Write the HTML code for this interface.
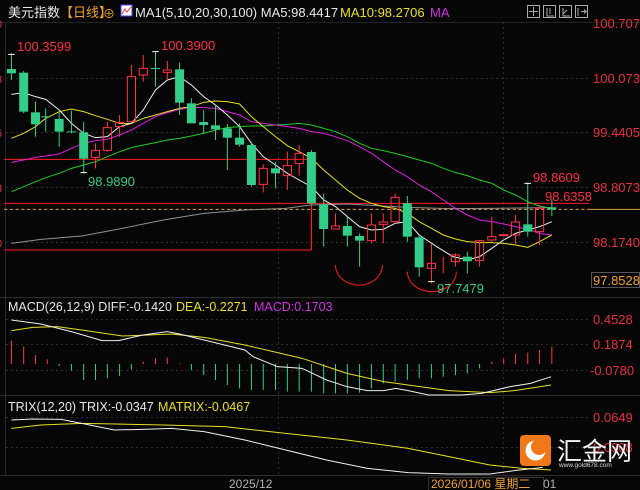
<!DOCTYPE html>
<html><head><meta charset="utf-8"><style>
html,body{margin:0;padding:0;background:#060606;width:640px;height:490px;overflow:hidden}
svg{display:block}
text{font-family:"Liberation Sans","Noto Sans CJK SC",sans-serif}
.nl{fill:none;vector-effect:non-scaling-stroke}
</style></head><body>
<svg width="640" height="490" viewBox="0 0 640 490" xmlns="http://www.w3.org/2000/svg">
<rect width="640" height="490" fill="#060606"/>
<!-- frame lines -->
<line x1="5.5" y1="22" x2="5.5" y2="476" stroke="#2a2a2a"/>
<line x1="0" y1="22.5" x2="640" y2="22.5" stroke="#222"/>
<line x1="0" y1="297.5" x2="640" y2="297.5" stroke="#2e2e2e"/>
<line x1="0" y1="395.5" x2="640" y2="395.5" stroke="#2e2e2e"/>
<line x1="0" y1="475.5" x2="640" y2="475.5" stroke="#2e2e2e"/>
<!-- grid -->
<g stroke="#2c2c2c" stroke-dasharray="2,3">
<line x1="6" y1="78.5" x2="588" y2="78.5"/><line x1="6" y1="132.5" x2="588" y2="132.5"/>
<line x1="6" y1="187.5" x2="588" y2="187.5"/><line x1="6" y1="242.5" x2="588" y2="242.5"/>
<line x1="6" y1="319.5" x2="588" y2="319.5"/><line x1="6" y1="344.5" x2="588" y2="344.5"/>
<line x1="6" y1="370.5" x2="588" y2="370.5"/><line x1="6" y1="417.5" x2="588" y2="417.5"/>
<line x1="6" y1="447.5" x2="588" y2="447.5"/>
<line x1="278.5" y1="22" x2="278.5" y2="475"/><line x1="503.5" y1="22" x2="503.5" y2="475"/>
</g>
<!-- header -->
<text x="8" y="17" font-size="13" fill="#e8e8e8">美元指数</text>
<text x="60" y="17" font-size="13" fill="#f0a030">【日线】</text>
<text x="103" y="18" font-size="12" fill="#f0a030">⊕</text>
<rect x="121" y="5" width="11" height="11" fill="#fff" stroke="#44f"/>
<polyline points="122,14 125,9 127,12 131,7" fill="none" stroke="#e33" stroke-width="1"/>
<text x="135" y="17" font-size="13" fill="#e8e8e8">MA1(5,10,20,30,100) MA5:98.4417</text>
<text x="340" y="17" font-size="13" fill="#e8e020">MA10:98.2706</text>
<text x="430" y="17" font-size="13" fill="#d030e0">MA</text>
<g fill="none" stroke="#aaa" stroke-width="1">
<rect x="527.5" y="5.5" width="12" height="12"/><rect x="543.5" y="5.5" width="12" height="12"/>
<rect x="559.5" y="5.5" width="12" height="12"/><rect x="575.5" y="5.5" width="12" height="12"/>
<path d="M533.5 7v9M529 11.5h9M547 8v8h7M550 8v6M563 8v8h7M563 14l4-4M578 8v8M581 11.5h5l-2-2M584 13.5l2-2"/>
</g>
<!-- right axis -->
<g font-size="13" fill="#e83040">
<text x="593" y="28">100.7070</text><text x="593" y="83">100.0738</text>
<text x="593" y="137">99.4405</text><text x="593" y="192">98.8073</text>
<text x="593" y="247">98.1740</text>
<text x="593" y="324">0.4528</text><text x="593" y="349">0.1874</text>
<text x="590" y="375">-0.0780</text><text x="593" y="422">0.0649</text>
<text x="593" y="452">0.0308</text>
</g>
<rect x="591.5" y="272.5" width="48" height="15" fill="#060606" stroke="#555"/>
<text x="593" y="285" font-size="13" fill="#f0a030">97.8528</text>
<g font-size="11" fill="#e83040"><text x="-4" y="28">0</text><text x="-4" y="83">8</text><text x="-4" y="137">5</text><text x="-4" y="192">3</text><text x="-4" y="247">0</text></g>

<!-- main chart in zoom coords -->
<g transform="scale(0.40816,0.33333)">
<line x1="10" y1="478" x2="763" y2="478" stroke="#ff1a1a" stroke-width="3"/>
<line x1="763" y1="478" x2="763" y2="750" stroke="#ff1a1a" stroke-width="3"/>
<line x1="10" y1="750" x2="763" y2="750" stroke="#ff1a1a" stroke-width="3"/>
<line x1="10" y1="610" x2="1443" y2="610" stroke="#ff1a1a" stroke-width="3"/>
<line x1="10" y1="628" x2="1443" y2="628" stroke="#e0a040" stroke-width="3" stroke-dasharray="8,6"/>
<line x1="1443" y1="628" x2="1568" y2="628" stroke="#e0a040" stroke-width="3"/>
<!-- MAs -->
<polyline class="nl" stroke="#909090" points="28,730 100,718 200,708 300,685 400,660 500,640 600,630 700,625 760,615 850,612 1000,622 1100,626 1200,625 1350,623"/>
<polyline class="nl" stroke="#22cc22" points="28,575 58,560 87,545 112,533 145,520 175,505 205,495 234,485 263,470 293,455 322,443 351,435 381,428 410,420 440,415 469,408 499,400 528,390 557,383 587,380 616,378 645,378 675,375 704,373 733,370 763,375 793,385 822,395 851,410 881,430 910,445 939,452 968,460 998,470 1027,480 1057,490 1086,505 1116,518 1145,527 1175,540 1205,550 1234,570 1263,585 1293,605 1322,618 1352,625"/>
<polyline class="nl" stroke="#e020e0" points="28,487 58,480 87,472 112,468 145,462 175,445 205,430 234,422 263,418 293,405 322,390 351,370 381,350 410,338 440,328 469,322 499,323 528,325 557,335 587,345 616,365 645,370 675,375 704,380 733,385 763,395 793,400 822,410 851,422 881,440 910,460 939,485 968,510 998,530 1027,555 1057,575 1086,600 1116,625 1145,645 1175,660 1205,665 1234,672 1263,680 1293,688 1322,700 1352,705"/>
<polyline class="nl" stroke="#e8e020" points="28,415 58,400 87,380 112,355 145,335 175,327 205,335 234,347 263,358 293,370 322,370 351,355 381,345 410,335 440,325 469,320 499,307 528,303 557,305 587,312 616,350 645,380 675,410 704,437 733,455 763,475 793,510 822,540 851,570 881,595 910,610 939,620 968,625 998,640 1027,665 1057,685 1086,705 1116,717 1145,725 1175,728 1205,728 1234,730 1263,735 1293,742 1322,725 1352,705"/>
<polyline class="nl" stroke="#f0f0f0" points="28,283 58,278 87,290 112,298 145,330 175,370 205,400 234,413 263,410 293,380 322,370 351,330 381,270 410,240 440,230 469,255 499,290 528,315 557,345 587,380 616,430 645,470 675,495 704,520 733,540 763,560 793,600 822,620 851,650 881,680 910,690 939,688 968,670 998,665 1027,705 1070,740 1110,770 1145,780 1175,770 1205,745 1234,720 1263,700 1293,690 1322,680 1352,665"/>
<!-- candles -->
<g stroke-width="1">
<!-- green: g(x,top,bot,hi,lo) -->
<g stroke="#33cc88" class="nl">
<path class="nl" d="M28 160V240M58 213V340M87 305V410M112 325V395M145 327V440M175 332V400M205 365V520M381 155V260M440 188V345M469 295V370M499 330V400M528 315V420M557 372V510M587 370V440M616 425V560M675 485V565M763 450V612M793 580V740M851 650V740M881 700V800M998 588V725M1027 705V830M1145 755V820M1293 548V710M1352 598V648"/>
</g>
<g fill="#33cc88">
<rect x="17" y="207" width="22" height="13"/><rect x="47" y="218" width="22" height="117"/>
<rect x="76" y="337" width="22" height="36"/><rect x="101" y="349" width="22" height="3"/>
<rect x="134" y="357" width="22" height="38"/><rect x="164" y="394" width="22" height="3"/>
<rect x="194" y="397" width="22" height="79"/><rect x="370" y="204" width="22" height="3"/>
<rect x="429" y="208" width="22" height="100"/><rect x="458" y="310" width="22" height="60"/>
<rect x="488" y="366" width="22" height="9"/><rect x="517" y="376" width="22" height="12"/>
<rect x="546" y="385" width="22" height="28"/><rect x="576" y="413" width="22" height="21"/>
<rect x="605" y="435" width="22" height="120"/><rect x="664" y="505" width="22" height="15"/>
<rect x="752" y="456" width="22" height="154"/><rect x="782" y="613" width="22" height="74"/>
<rect x="840" y="678" width="22" height="29"/><rect x="870" y="708" width="22" height="14"/>
<rect x="987" y="610" width="22" height="100"/><rect x="1016" y="712" width="22" height="90"/>
<rect x="1134" y="770" width="22" height="14"/><rect x="1282" y="673" width="22" height="22"/>
<rect x="1341" y="622" width="22" height="6"/>
</g>
<!-- red -->
<path class="nl" stroke="#ff3344" d="M234 430V451M234 472V505M263 365V383M263 451V455M293 345V367M293 380V410M322 195V230M351 165V205M351 225V245M410 183V210M410 217V240M645 493V505M645 553V577M704 455V497M704 527V570M733 435V460M733 490V527M822 640V678M910 640V675M910 722V730M939 640V666M939 673V730M968 580V592M968 665V670M1057 730V850M1116 760V800M1175 722V800M1205 650V710M1205 720V725M1263 645V666M1263 705V735M1322 615V625M1322 695V735M1086 770V820"/>
<g fill="#060606" stroke="#ff3344" class="nl">
<rect class="nl" x="224" y="451" width="20" height="21"/><rect class="nl" x="253" y="383" width="20" height="68"/>
<rect class="nl" x="283" y="367" width="20" height="13"/><rect class="nl" x="312" y="230" width="20" height="135"/>
<rect class="nl" x="341" y="205" width="20" height="20"/><rect class="nl" x="400" y="210" width="20" height="7"/>
<rect class="nl" x="635" y="505" width="20" height="48"/><rect class="nl" x="694" y="497" width="20" height="30"/>
<rect class="nl" x="723" y="460" width="20" height="30"/><rect class="nl" x="812" y="678" width="20" height="9"/>
<rect class="nl" x="900" y="675" width="20" height="47"/><rect class="nl" x="929" y="666" width="20" height="7"/>
<rect class="nl" x="958" y="592" width="20" height="73"/><rect class="nl" x="1195" y="710" width="20" height="10"/>
<rect class="nl" x="1224" y="704" width="20" height="3"/><rect class="nl" x="1253" y="666" width="20" height="39"/>
<rect class="nl" x="1312" y="625" width="20" height="70"/><rect class="nl" x="1165" y="722" width="20" height="60"/>
<rect class="nl" x="1106" y="765" width="20" height="20"/><rect class="nl" x="1047" y="790" width="20" height="15"/>
</g>
<path class="nl" stroke="#fff" d="M20 163H36M373 155H389M197 518H213M1285 550H1301M1049 845H1065"/>
</g>
<!-- arcs -->
<path class="nl" stroke="#ff1a1a" d="M822 795A57 60 0 0 0 937 795M998 815A60 60 0 0 0 1118 815"/>
</g>
<g font-size="13">
<text x="17" y="51" fill="#ff3040">100.3599</text>
<text x="161" y="50" fill="#ff3040">100.3900</text>
<text x="88" y="186" fill="#33cc88">98.9890</text>
<text x="533" y="182" fill="#ff3040">98.8609</text>
<text x="545" y="201" fill="#ff3040">98.6358</text>
<text x="437" y="293" fill="#33cc88">97.7479</text>
</g>

<!-- MACD -->
<text x="8" y="311" font-size="12.5" fill="#e8e8e8">MACD(26,12,9) DIFF:-0.1420</text>
<text x="176" y="311" font-size="12.5" fill="#e8e020">DEA:-0.2271</text>
<text x="254" y="311" font-size="12.5" fill="#d030e0">MACD:0.1703</text>
<text x="8" y="411" font-size="12.5" fill="#e8e8e8">TRIX(12,20) TRIX:-0.0347</text>
<text x="158" y="411" font-size="12.5" fill="#e8e020">MATRIX:-0.0467</text>
<g transform="translate(0,250) scale(0.40816,0.33333)">
<path class="nl" stroke="#ff3344" d="M28 342V272M58 342V290M87 342V315M116 342V328M351 342V335M381 342V325M410 342V323M440 342V340M1205 342V335M1234 342V326M1263 342V312M1293 342V308M1322 342V300M1352 342V290"/>
<path class="nl" stroke="#33cc88" d="M145 342V348M175 342V362M205 342V390M234 342V390M263 342V385M293 342V378M322 342V358M469 342V360M499 342V375M528 342V390M557 342V405M587 342V415M616 342V420M645 342V420M675 342V420M704 342V425M733 342V425M763 342V425M793 342V430M822 342V430M851 342V430M881 342V428M910 342V415M939 342V400M968 342V395M998 342V390M1027 342V385M1057 342V385M1086 342V380M1116 342V375M1145 342V370M1175 342V355"/>
<polyline class="nl" stroke="#e8e020" points="28,242 80,232 140,230 200,240 300,258 420,252 500,262 600,285 740,325 850,370 940,395 1000,405 1100,422 1200,428 1260,422 1350,405"/>
<polyline class="nl" stroke="#f0f0f0" points="28,210 100,222 175,245 250,272 290,272 350,255 410,245 440,252 500,270 600,300 620,320 680,350 740,355 800,390 850,410 900,422 940,422 970,415 1000,422 1050,435 1130,435 1180,430 1250,410 1300,400 1350,380"/>
<polyline class="nl" stroke="#e8e020" points="28,535 100,525 200,520 400,525 550,530 700,550 850,570 1000,595 1100,620 1200,645 1280,655 1350,660"/>
<polyline class="nl" stroke="#f0f0f0" points="28,510 80,507 150,508 200,520 280,540 350,538 420,535 500,545 600,570 700,600 800,630 900,655 1000,668 1100,672 1200,672 1260,662 1330,652"/>
</g>
<!-- logo -->
<rect x="520" y="435" width="31" height="31" rx="4" fill="#f07818"/>
<circle cx="535.5" cy="450.5" r="10" fill="#fff"/>
<circle cx="539" cy="447" r="8" fill="#f07818"/>
<text x="557" y="460" font-size="25" fill="#f4f4f4" font-family="'Noto Sans CJK SC',sans-serif">汇金网</text>
<text x="559" y="467" font-size="6.5" fill="#ddd">www.gold678.com</text>
<!-- date axis -->
<text x="229" y="488" font-size="12" fill="#b0b0b0">2025/12</text>
<rect x="428.5" y="477.5" width="115" height="14" fill="#060606" stroke="#333"/>
<text x="431" y="488" font-size="12" fill="#f0a030" font-family="'Liberation Sans','Noto Sans CJK SC',sans-serif">2026/01/06 星期二</text>
<text x="543" y="488" font-size="12" fill="#b0b0b0">01</text>
</svg>
</body></html>
